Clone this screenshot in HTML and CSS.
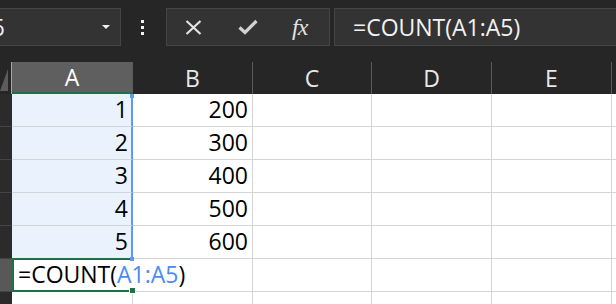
FILE: index.html
```html
<!DOCTYPE html>
<html lang="en">

<head>
  <meta charset="UTF-8">
  <title>COUNT</title>
  <link rel="stylesheet" href="styles.css">
</head>

<body>

  <!-- Formula toolbar -->
  <div class="toolbar">
    <div class="namebox">
      <span class="ref">A6</span>
      <span class="caret"></span>
    </div>
    <div class="dots"><i></i><i></i><i></i></div>
    <div class="fbtns">
      <svg class="ic-x" viewBox="0 0 17 15" width="17" height="15">
        <path d="M1.5 1 L15.5 14 M15.5 1 L1.5 14" stroke="#e2e2e2" stroke-width="2.2" fill="none" />
      </svg>
      <svg class="ic-ok" viewBox="0 0 20 16" width="20" height="16">
        <path d="M1.5 8.5 L7 13.5 L18.5 2" stroke="#d2d2d2" stroke-width="3.2" fill="none" />
      </svg>
      <span class="fx">fx</span>
    </div>
    <div class="fbar">=COUNT(A1:A5)</div>
  </div>

  <!-- Sheet -->
  <div class="sheet">
    <div class="corner"><span class="tri"></span></div>
    <div class="colhead on">A</div>
    <div class="colhead">B</div>
    <div class="colhead">C</div>
    <div class="colhead">D</div>
    <div class="colhead">E</div>
    <div class="colhead"></div>

    <div class="rowhead"></div>
    <div class="cell sel first">1</div>
    <div class="cell">200</div>
    <div class="cell"></div>
    <div class="cell"></div>
    <div class="cell"></div>
    <div class="cell"></div>

    <div class="rowhead"></div>
    <div class="cell sel">2</div>
    <div class="cell">300</div>
    <div class="cell"></div>
    <div class="cell"></div>
    <div class="cell"></div>
    <div class="cell"></div>

    <div class="rowhead"></div>
    <div class="cell sel">3</div>
    <div class="cell">400</div>
    <div class="cell"></div>
    <div class="cell"></div>
    <div class="cell"></div>
    <div class="cell"></div>

    <div class="rowhead"></div>
    <div class="cell sel">4</div>
    <div class="cell">500</div>
    <div class="cell"></div>
    <div class="cell"></div>
    <div class="cell"></div>
    <div class="cell"></div>

    <div class="rowhead"></div>
    <div class="cell sel last">5</div>
    <div class="cell">600</div>
    <div class="cell"></div>
    <div class="cell"></div>
    <div class="cell"></div>
    <div class="cell"></div>

    <div class="rowhead on"></div>
    <div class="cell active">=COUNT(<span class="refblue">A1:A5</span>)</div>
    <div class="cell"></div>
    <div class="cell"></div>
    <div class="cell"></div>
    <div class="cell"></div>
    <div class="cell"></div>

    <div class="rowhead"></div>
    <div class="cell"></div>
    <div class="cell"></div>
    <div class="cell"></div>
    <div class="cell"></div>
    <div class="cell"></div>
    <div class="cell"></div>
  </div>

</body>

</html>
```

FILE: styles.css
```css
/* Page */
body {
  margin: 0;
  width: 616px;
  height: 304px;
  overflow: hidden;
  background: #262626;
  font-family: 'Open Sans', sans-serif;
}

/* Formula toolbar */
.toolbar {
  display: flex;
  align-items: flex-start;
  height: 62px;
  padding-top: 8px;
  box-sizing: border-box;
}

.namebox,
.fbtns,
.fbar {
  height: 38px;
  box-sizing: border-box;
  background: #333333;
  border: 1px solid #454545;
  display: flex;
  align-items: center;
  color: #f2f2f2;
  font-size: 23px;
}

.namebox {
  flex: none;
  width: 151px;
  margin-left: -30px;
  padding: 0 10px 0 6px;
  justify-content: space-between;
}

.caret {
  width: 0;
  height: 0;
  border-left: 4px solid transparent;
  border-right: 4px solid transparent;
  border-top: 4px solid #f0f0f0;
}

.dots {
  flex: none;
  width: 45px;
  height: 38px;
  display: flex;
  flex-direction: column;
  align-items: center;
  justify-content: center;
  gap: 3px;
  padding-right: 2px;
  box-sizing: border-box;
}

.dots i {
  width: 3px;
  height: 3px;
  background: #f2f2f2;
}

.fbtns {
  flex: none;
  width: 164px;
}

.ic-x {
  margin-left: 18px;
}

.ic-ok {
  margin-left: 36px;
}

.fx {
  margin-left: 34px;
  font-family: 'Liberation Serif', serif;
  font-style: italic;
  font-size: 24px;
  color: #e2e2e2;
  letter-spacing: -1px;
}

.fbar {
  flex: none;
  width: 300px;
  margin-left: 4px;
  padding-left: 18px;
}

/* Sheet grid */
.sheet {
  display: grid;
  grid-template-columns: 12px 121px 120px 119px 120px 120px 1fr;
  grid-template-rows: 32px repeat(7, 33px);
  font-size: 23px;
}

.corner {
  position: relative;
  background: #262626;
  border-right: 1px solid #a6a6a6;
}

.corner .tri {
  position: absolute;
  right: 3px;
  bottom: 3px;
  width: 8px;
  height: 22px;
  background: #5c5c5c;
  clip-path: polygon(100% 0, 100% 100%, 0 100%);
}

.colhead {
  background: #262626;
  color: #e8e8e8;
  text-align: center;
  line-height: 32px;
  border-right: 1px solid #5a5a5a;
}

.colhead.on {
  background: #5f5f5f;
  color: #ffffff;
  border-bottom: 2px solid #1e7145;
  line-height: 30px;
}

.rowhead {
  background: #2b2b2b;
  border-bottom: 1px solid #444444;
}

.rowhead.on {
  background: #585858;
}

.cell {
  position: relative;
  background: #ffffff;
  color: #000000;
  border-right: 1px solid #d4d4d4;
  border-bottom: 1px solid #d4d4d4;
  text-align: right;
  line-height: 30px;
  padding-right: 4px;
  white-space: nowrap;
}

/* Referenced range A1:A5 */
.cell.sel {
  background: #eaf2fd;
  border-right: 2px solid #5b9bf5;
  padding-right: 3px;
}

.cell.first::after,
.cell.last::after {
  content: "";
  position: absolute;
  z-index: 2;
  right: -3px;
  width: 4px;
  height: 4px;
  background: #5b9bf5;
}

.cell.first::after {
  top: 0;
}

.cell.last::after {
  bottom: -3px;
}

/* Active cell A6, its text runs into B6 */
.cell.active {
  z-index: 1;
  margin-top: -1px;
  border: 2px solid #1e7145;
  border-right: none;
  text-align: left;
  padding-left: 4px;
  line-height: 29px;
}

.cell.active::after {
  content: "";
  position: absolute;
  right: -3px;
  bottom: -4px;
  width: 5px;
  height: 5px;
  background: #1e7145;
  border: 1px solid #ffffff;
}

.refblue {
  color: #4a8bf4;
}
```
